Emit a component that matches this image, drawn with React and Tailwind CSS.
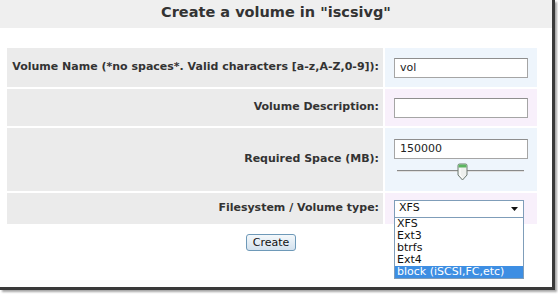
import React from "react";

const font = { fontFamily: '"DejaVu Sans", Verdana, sans-serif' };

function TextBox({ value }) {
  return (
    <div className="h-[20px] w-[134px] border border-[#a5a5a5] border-t-[#8e8e8e] bg-white pl-[5px] text-[11px] leading-[18px] text-[#222]">
      {value}
    </div>
  );
}

function Slider() {
  return (
    <div className="relative mt-[4px] h-[18px] w-[134px]">
      <div className="absolute left-[3px] right-[4px] top-[7px] h-[2px] border-t border-[#8a8a8a] border-b border-b-[#e0e0e0]" />
      <svg className="absolute left-[63px] top-0" width="11" height="18" viewBox="0 0 11 18">
        <path d="M1 2.5 Q1 1 2.5 1 H8.5 Q10 1 10 2.5 V12 L5.5 17 L1 12 Z" fill="#eef0ee" stroke="#6f7a72" strokeWidth="1" />
        <rect x="1.5" y="1.5" width="8" height="3" fill="#5bb560" />
        <path d="M3 5 V12 L5.5 14.5" fill="none" stroke="#fff" strokeWidth="1" />
      </svg>
    </div>
  );
}

function Select() {
  const options = ["XFS", "Ext3", "btrfs", "Ext4", "block (iSCSI,FC,etc)"];
  return (
    <div className="relative">
      <div className="flex h-[18px] w-[130px] items-center justify-between border border-[#7f9db9] bg-white pl-[4px] pr-[5px] text-[11px] text-[#111]">
        <span>XFS</span>
        <svg width="7" height="4" viewBox="0 0 7 4">
          <path d="M0 0 H7 L3.5 4 Z" fill="#111" />
        </svg>
      </div>
      <div className="absolute left-0 top-[17px] z-10 w-[130px] border border-[#7f9db9] bg-white text-[11px] leading-[12px] text-[#111]">
        {options.map((o, i) => (
          <div
            key={o}
            className={i === options.length - 1 ? "bg-[#3d8ee3] pl-[2px] text-white" : "pl-[2px]"}
          >
            {o}
          </div>
        ))}
      </div>
    </div>
  );
}

export default function App() {
  const rows = [
    {
      label: "Volume Name (*no spaces*. Valid characters [a-z,A-Z,0-9]):",
      h: "h-[39px]",
      bg: "bg-[#eef5fc]",
      content: <TextBox value="vol" />,
    },
    {
      label: "Volume Description:",
      h: "h-[37px]",
      bg: "bg-[#f8f0fb]",
      content: <TextBox value="" />,
    },
    {
      label: "Required Space (MB):",
      h: "h-[63px]",
      bg: "bg-[#eef5fc]",
      content: (
        <div className="flex flex-col">
          <TextBox value="150000" />
          <Slider />
        </div>
      ),
    },
    {
      label: "Filesystem / Volume type:",
      h: "h-[31px]",
      bg: "bg-[#f8f0fb]",
      content: <Select />,
    },
  ];

  return (
    <div className="h-[294px] w-[558px] bg-white" style={font}>
      <div className="h-[290px] w-[555px] border-b-[3px] border-r-[3px] border-[#3a3a3a] bg-white shadow-[2px_2px_2px_rgba(0,0,0,0.35)]">
        <div className="flex h-[28px] items-center justify-center bg-[#efefef] pb-[2px] text-[14.5px] font-bold text-[#333]">
          Create a volume in "iscsivg"
        </div>
        <div className="ml-[7px] mt-[20px] grid w-[530px] grid-cols-[376px_152px] gap-[2px] text-[11px] font-bold text-[#333]">
          {rows.map((r) => (
            <React.Fragment key={r.label}>
              <div className={`flex items-center justify-end bg-[#ebebeb] pr-[4px] ${r.h}`}>{r.label}</div>
              <div className={`flex items-center pl-[9px] font-normal ${r.bg} ${r.h}`}>{r.content}</div>
            </React.Fragment>
          ))}
        </div>
        <div className="mt-[10px] flex justify-center pr-[10px]">
          <button className="h-[17px] rounded-[3px] border border-[#6e99b8] bg-gradient-to-b from-[#f4f8fb] to-[#d4e2ee] px-[6px] text-[11px] leading-[14px] text-[#111]">
            Create
          </button>
        </div>
      </div>
    </div>
  );
}
